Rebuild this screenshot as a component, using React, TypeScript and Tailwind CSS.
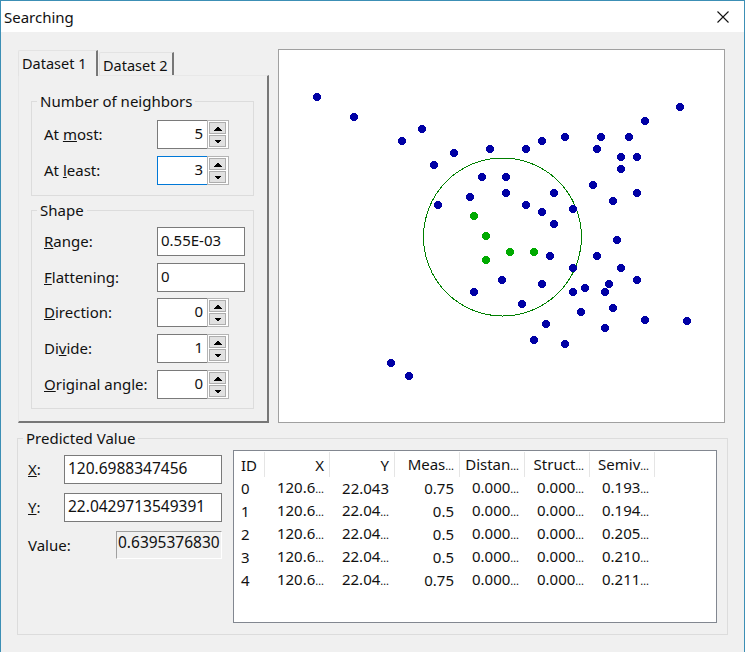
import React from "react";

const blue = [
  [317, 97], [354, 117], [402, 141], [422, 129], [434, 165], [454, 153], [490, 149], [526, 149], [542, 141], [565, 137],
  [601, 137], [629, 137], [645, 121], [680, 107], [597, 149], [621, 157], [637, 157], [621, 169], [593, 185], [637, 193],
  [613, 201], [482, 177], [506, 177], [470, 197], [506, 193], [554, 193], [438, 205], [526, 205], [542, 212], [573, 209],
  [554, 224], [617, 240], [550, 256], [597, 256], [573, 268], [621, 268], [637, 280], [502, 280], [542, 284], [474, 292],
  [573, 292], [585, 288], [609, 284], [605, 292], [522, 304], [613, 308], [581, 312], [645, 320], [687, 321], [546, 324],
  [605, 328], [534, 340], [565, 344], [391, 363], [409, 376],
];
const green = [[474, 216], [486, 236], [510, 252], [534, 252], [486, 260]];

const headers = ["ID", "X", "Y", "Meas…", "Distan…", "Struct…", "Semiv…"];
const rows = [
  ["0", "120.6…", "22.043", "0.75", "0.000…", "0.000…", "0.193…"],
  ["1", "120.6…", "22.04…", "0.5", "0.000…", "0.000…", "0.194…"],
  ["2", "120.6…", "22.04…", "0.5", "0.000…", "0.000…", "0.205…"],
  ["3", "120.6…", "22.04…", "0.5", "0.000…", "0.000…", "0.210…"],
  ["4", "120.6…", "22.04…", "0.75", "0.000…", "0.000…", "0.211…"],
];

// the list control's ellipsis is much tighter than Noto's
function Cell({ text }: { text: string }) {
  if (!text.endsWith("…")) return <>{text}</>;
  return (
    <>
      {text.slice(0, -1)}
      <span className="text-[11px]">…</span>
    </>
  );
}

function Arrow({ down }: { down?: boolean }) {
  return (
    <svg width="9" height="5" viewBox="0 0 9 5" shapeRendering="crispEdges">
      <path d={down ? "M0.5 0.5H8.5L4.5 4.5Z" : "M4.5 0.5L8.5 4.5H0.5Z"} fill="#000" />
    </svg>
  );
}

function Spin({ value, focused }: { value: string; focused?: boolean }) {
  return (
    <div className="flex h-[29px]">
      <div className={`w-[50px] h-full bg-white border border-r-0 text-right pr-[4px] pb-[3px] flex items-center justify-end ${focused ? "border-[#0078d7]" : "border-[#7a7a7a]"}`}>
        {value}
      </div>
      <div className="w-[22px] h-full bg-white border border-[#b4b4b4] flex flex-col gap-px p-px pr-[2px]">
        <div className="h-[12px] bg-[#e1e1e1] border border-[#adadad] flex items-center justify-center">
          <Arrow />
        </div>
        <div className="h-[12px] bg-[#e1e1e1] border border-[#adadad] flex items-center justify-center">
          <Arrow down />
        </div>
      </div>
    </div>
  );
}

function Field({ children }: { children: React.ReactNode }) {
  return <div className="h-[29px] w-[88px] bg-white border border-[#7a7a7a] pl-[3px] pb-[3px] flex items-center">{children}</div>;
}

function Row({ label, children }: { label: React.ReactNode; children: React.ReactNode }) {
  return (
    <div className="flex items-center h-[29px]">
      <div className="w-[125px] pl-[12px] pb-[2px] whitespace-nowrap">{label}</div>
      {children}
    </div>
  );
}

function Group({ title, className, children }: { title: string; className: string; children: React.ReactNode }) {
  return (
    <fieldset className={`border border-[#dcdcdc] ${className}`}>
      <legend className="ml-[5px] px-[3px] h-[20px] leading-[20px]">{title}</legend>
      {children}
    </fieldset>
  );
}

export default function App() {
  return (
    <div className="w-[745px] h-[652px] overflow-hidden flex flex-col bg-[#f0f0f0] border-x border-t border-[#3c8fb5] text-[15px] leading-[20px] text-[#111] font-['Noto_Sans',sans-serif]">
      <div className="h-[31px] shrink-0 bg-white flex items-center justify-between pl-[3px] pr-[15px]">
        <span>Searching</span>
        <svg width="12" height="12" viewBox="0 0 12 12">
          <path d="M0.5 0.5L11.5 11.5M11.5 0.5L0.5 11.5" stroke="#111" strokeWidth="1.1" />
        </svg>
      </div>

      <div className="flex pl-[17px] pt-[17px] shrink-0">
        <div className="w-[251px] h-[374px] flex flex-col">
          <div className="h-[26px] flex items-end shrink-0 text-[14.5px]">
            <div className="w-[80px] h-[26px] relative top-px z-10 bg-[#f0f0f0] border-t border-l border-r-2 border-t-[#e3e3e3] border-l-[#e3e3e3] border-r-[#777] rounded-tl-[2px] pl-[3px] pt-[2px]">
              Dataset 1
            </div>
            <div className="w-[75px] h-[23px] ml-px border-t border-l border-r-2 border-t-[#e3e3e3] border-l-[#e3e3e3] border-r-[#777] rounded-tl-[2px] pl-[3px] pt-[2px]">
              Dataset 2
            </div>
          </div>
          <div className="flex-1 border-t border-l border-r-2 border-b-2 border-t-[#e8e8e8] border-l-[#e8e8e8] border-r-[#777] border-b-[#777] pt-[15px] pl-[12px]">
            <Group title="Number of neighbors" className="w-[223px] h-[105px] pt-[9px]">
              <div className="flex flex-col gap-[7px]">
                <Row label={<>At <u>m</u>ost:</>}><Spin value="5" /></Row>
                <Row label={<>At <u>l</u>east:</>}><Spin value="3" focused /></Row>
              </div>
            </Group>
            <Group title="Shape" className="w-[223px] h-[209px] mt-[4px] pt-[7px]">
              <div className="flex flex-col gap-[7px]">
                <Row label={<><u>R</u>ange:</>}><Field>0.55E-03</Field></Row>
                <Row label={<><u>F</u>lattening:</>}><Field>0</Field></Row>
                <div className="-mt-px">
                  <Row label={<><u>D</u>irection:</>}><Spin value="0" /></Row>
                </div>
                <Row label={<>Di<u>v</u>ide:</>}><Spin value="1" /></Row>
                <Row label={<><u>O</u>riginal angle:</>}><Spin value="0" /></Row>
              </div>
            </Group>
          </div>
        </div>

        <div className="w-[447px] h-[374px] ml-[9px] bg-white border border-[#a0a0a0]">
          <svg width="445" height="372" viewBox="279 50 445 372" shapeRendering="crispEdges">
            <circle cx="502.5" cy="237" r="79" fill="none" stroke="#007f00" strokeWidth="1" />
            {blue.map(([x, y]) => (
              <circle key={`${x}-${y}`} cx={x} cy={y} r="4.2" fill="#0000a5" />
            ))}
            {green.map(([x, y]) => (
              <circle key={`${x}-${y}`} cx={x} cy={y} r="4.2" fill="#00aa00" />
            ))}
          </svg>
        </div>
      </div>

      <fieldset className="ml-[16px] mt-[5px] w-[711px] h-[207px] border border-[#dcdcdc] flex">
        <legend className="ml-[5px] px-[3px] h-[20px] leading-[20px]">Predicted Value</legend>
        <div className="flex">
          <div className="w-[205px] ml-[9px] pt-[7px] flex flex-col">
            <div className="flex items-center h-[29px]">
              <div className="w-[37px] pl-px pb-[2px]"><u>X</u>:</div>
              <div className="w-[158px] h-full bg-white border border-[#7a7a7a] pl-[3px] pb-[3px] flex items-center text-[15.5px]">120.6988347456</div>
            </div>
            <div className="flex items-center h-[29px] mt-[9px]">
              <div className="w-[37px] pl-px pb-[2px]"><u>Y</u>:</div>
              <div className="w-[158px] h-full bg-white border border-[#7a7a7a] pl-[3px] pb-[3px] flex items-center text-[15.5px]">22.0429713549391</div>
            </div>
            <div className="flex items-center h-[28px] mt-[9px]">
              <div className="w-[89px] pl-px">Value:</div>
              <div className="w-[106px] h-full border border-t-[#a0a0a0] border-l-[#a0a0a0] border-r-white border-b-white pl-px pb-[6px] flex items-center whitespace-nowrap overflow-hidden text-[15.5px]">0.6395376830</div>
            </div>
          </div>
          <div className="w-[484px] h-[173px] ml-[1px] mt-[2px] bg-white border border-[#828790] pt-px">
            <div className="flex h-[25px]">
              {headers.map((h, i) => (
                <div key={h} className={`h-full flex items-center border-r border-[#e5e5e5] whitespace-nowrap ${i === 0 ? "w-[31px] pl-[7px]" : "w-[65px] justify-end pr-[5px]"}`}>
                  <span>
                    <Cell text={h} />
                  </span>
                </div>
              ))}
            </div>
            <div className="-mt-px">
              {rows.map((r) => (
                <div key={r[0]} className="flex h-[23px] items-center">
                  {r.map((c, i) => (
                    <div key={i} className={i === 0 ? "w-[31px] pl-[7px]" : "w-[65px] text-right pr-[6px]"}>
                      <Cell text={c} />
                    </div>
                  ))}
                </div>
              ))}
            </div>
          </div>
        </div>
      </fieldset>
    </div>
  );
}
